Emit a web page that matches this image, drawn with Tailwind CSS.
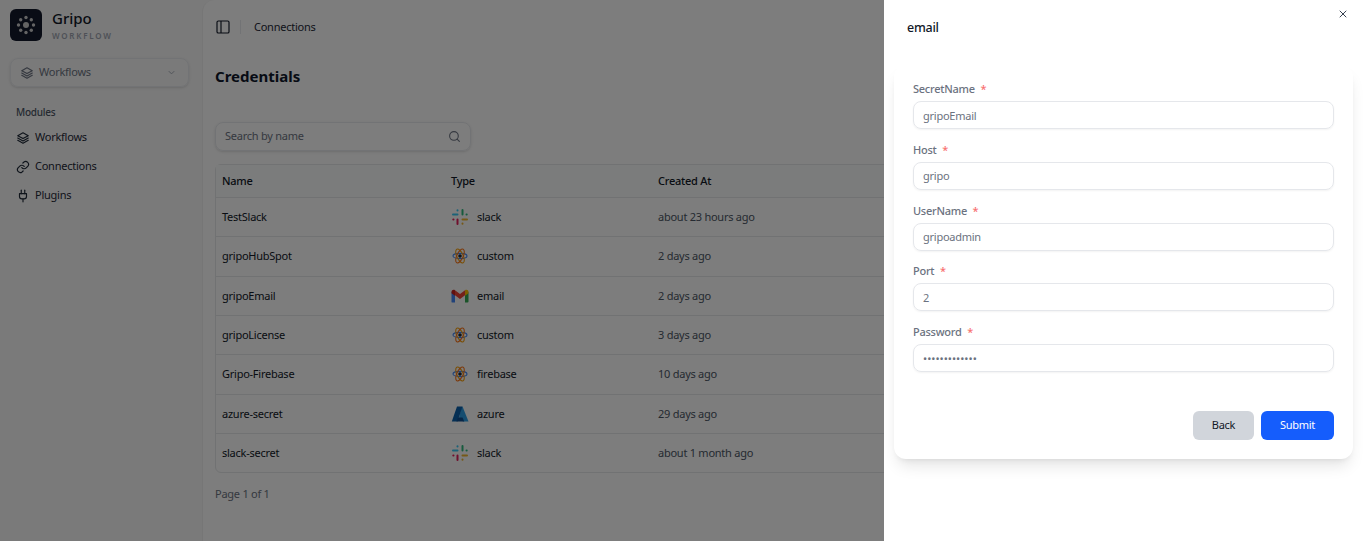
<!DOCTYPE html>
<html lang="en">
<head>
    <meta charset="UTF-8">
    <title>Gripo Connections</title>
    <script src="https://cdn.jsdelivr.net/npm/@tailwindcss/browser@4"></script>
</head>
<body class="bg-white font-['Noto_Sans',sans-serif] tracking-[-0.25px] overflow-hidden">
    <div class="relative h-[541px] w-[1363px] overflow-hidden">
        <!-- page behind the drawer -->
        <div class="flex h-full bg-[#f4f4f4]">
            <aside class="w-[202px] shrink-0 px-[10px] pt-[9px]">
                <div class="flex items-center gap-[10px]">
                    <div class="flex h-8 w-8 items-center justify-center rounded-md bg-[#12182b]">
                        <svg width="22" height="22" viewBox="0 0 22 22" fill="#c9c9c9">
                            <circle cx="11" cy="11" r="3"/>
                            <circle cx="11" cy="3.5" r="1.7"/><circle cx="16.3" cy="5.7" r="1.7"/><circle cx="18.5" cy="11" r="1.7"/><circle cx="16.3" cy="16.3" r="1.7"/>
                            <circle cx="11" cy="18.5" r="1.7"/><circle cx="5.7" cy="16.3" r="1.7"/><circle cx="3.5" cy="11" r="1.7"/><circle cx="5.7" cy="5.7" r="1.7"/>
                        </svg>
                    </div>
                    <div>
                        <div class="text-[15px] leading-[19px] font-medium tracking-normal text-[#111827]">Gripo</div>
                        <div class="mt-[3px] text-[8px] leading-[10px] font-semibold tracking-[0.22em] text-[#9ca3af]">WORKFLOW</div>
                    </div>
                </div>
                <div class="mt-[17px] flex h-[29px] w-[179px] items-center justify-between rounded-lg border border-[#e5e7eb] pr-[11px] pl-[9px] shadow-sm">
                    <div class="flex items-center gap-[5px] text-[11px] text-[#6b7280]">
                        <svg width="14" height="14" viewBox="0 0 24 24" fill="none" stroke="currentColor" stroke-width="2" stroke-linecap="round" stroke-linejoin="round">
                            <path d="M12 3 3 8l9 5 9-5-9-5Z"/><path d="m3 12 9 5 9-5"/><path d="m3 16 9 5 9-5"/>
                        </svg>
                        Workflows
                    </div>
                    <svg width="11" height="11" viewBox="0 0 24 24" fill="none" stroke="#9ca3af" stroke-width="2"><path d="m6 9 6 6 6-6"/></svg>
                </div>
                <div class="mt-[18px] px-[6px] text-[10px] leading-[14px] font-medium text-[#4b5563]">Modules</div>
                <nav class="mt-[4px] flex flex-col text-[11px] text-[#1f2937]">
                    <a class="flex h-[29px] items-center gap-[5px] px-[6px]">
                        <svg width="14" height="14" viewBox="0 0 24 24" fill="none" stroke="currentColor" stroke-width="2" stroke-linecap="round" stroke-linejoin="round"><path d="M12 3 3 8l9 5 9-5-9-5Z"/><path d="m3 12 9 5 9-5"/><path d="m3 16 9 5 9-5"/></svg>
                        Workflows
                    </a>
                    <a class="flex h-[29px] items-center gap-[5px] px-[6px]">
                        <svg width="14" height="14" viewBox="0 0 24 24" fill="none" stroke="currentColor" stroke-width="2" stroke-linecap="round" stroke-linejoin="round"><path d="M10 13a5 5 0 0 0 7.5.5l3-3a5 5 0 0 0-7-7l-1.7 1.7"/><path d="M14 11a5 5 0 0 0-7.5-.5l-3 3a5 5 0 0 0 7 7l1.7-1.7"/></svg>
                        Connections
                    </a>
                    <a class="flex h-[29px] items-center gap-[5px] px-[6px]">
                        <svg width="14" height="14" viewBox="0 0 24 24" fill="none" stroke="currentColor" stroke-width="2" stroke-linecap="round" stroke-linejoin="round"><path d="M12 22v-5"/><path d="M9 8V2"/><path d="M15 8V2"/><path d="M18 8v5a4 4 0 0 1-4 4h-4a4 4 0 0 1-4-4V8Z"/></svg>
                        Plugins
                    </a>
                </nav>
            </aside>

            <main class="flex-1 rounded-tl-xl border-l border-[#ececec] bg-[#fafafa] pl-[12px]">
                <div class="flex h-[54px] items-center">
                    <svg width="16" height="16" viewBox="0 0 24 24" fill="none" stroke="#111827" stroke-width="1.75"><rect x="3" y="3" width="18" height="18" rx="2"/><path d="M9 3v18"/></svg>
                    <div class="mr-[13px] ml-[9px] h-[14px] w-px bg-[#e5e7eb]"></div>
                    <span class="text-[11px] text-[#1f2937]">Connections</span>
                </div>
                <h1 class="mt-[10px] text-[15px] leading-[24px] font-bold tracking-normal text-[#0f172a]">Credentials</h1>
                <div class="mt-[34px] flex h-[29px] w-[256px] items-center justify-between rounded-lg border border-[#e5e7eb] pr-[9px] pl-[9px] shadow-sm">
                    <span class="text-[11px] text-[#6b7280]">Search by name</span>
                    <svg width="13" height="13" viewBox="0 0 24 24" fill="none" stroke="#6b7280" stroke-width="2" stroke-linecap="round"><circle cx="11" cy="11" r="8"/><path d="m21 21-4.3-4.3"/></svg>
                </div>
                <div class="mt-[13px] w-[1135px] rounded-md border border-[#e2e4e6] text-[11px] text-[#111827]">
                    <div class="grid h-[32px] grid-cols-[229px_207px_1fr] items-center bg-[#f7f9f8] px-[6px] font-medium">
                        <span>Name</span><span>Type</span><span>Created At</span>
                    </div>
                    <div class="grid h-[39.33px] grid-cols-[229px_207px_1fr] items-center border-t border-[#e2e4e6] px-[6px]">
                        <span>TestSlack</span>
                        <span class="flex items-center gap-[8px]"><svg width="18" height="18" viewBox="0 0 18 18"><use href="#slack"/></svg>slack</span>
                        <span class="text-[#4b5563]">about 23 hours ago</span>
                    </div>
                    <div class="grid h-[39.33px] grid-cols-[229px_207px_1fr] items-center border-t border-[#e2e4e6] px-[6px]">
                        <span>gripoHubSpot</span>
                        <span class="flex items-center gap-[8px]"><svg width="18" height="18" viewBox="0 0 18 18"><use href="#atom"/></svg>custom</span>
                        <span class="text-[#4b5563]">2 days ago</span>
                    </div>
                    <div class="grid h-[39.33px] grid-cols-[229px_207px_1fr] items-center border-t border-[#e2e4e6] px-[6px]">
                        <span>gripoEmail</span>
                        <span class="flex items-center gap-[8px]"><svg width="18" height="18" viewBox="0 0 18 18"><use href="#gmail"/></svg>email</span>
                        <span class="text-[#4b5563]">2 days ago</span>
                    </div>
                    <div class="grid h-[39.33px] grid-cols-[229px_207px_1fr] items-center border-t border-[#e2e4e6] px-[6px]">
                        <span>gripoLicense</span>
                        <span class="flex items-center gap-[8px]"><svg width="18" height="18" viewBox="0 0 18 18"><use href="#atom"/></svg>custom</span>
                        <span class="text-[#4b5563]">3 days ago</span>
                    </div>
                    <div class="grid h-[39.33px] grid-cols-[229px_207px_1fr] items-center border-t border-[#e2e4e6] px-[6px]">
                        <span>Gripo-Firebase</span>
                        <span class="flex items-center gap-[8px]"><svg width="18" height="18" viewBox="0 0 18 18"><use href="#atom"/></svg>firebase</span>
                        <span class="text-[#4b5563]">10 days ago</span>
                    </div>
                    <div class="grid h-[39.33px] grid-cols-[229px_207px_1fr] items-center border-t border-[#e2e4e6] px-[6px]">
                        <span>azure-secret</span>
                        <span class="flex items-center gap-[8px]"><svg width="18" height="18" viewBox="0 0 18 18"><use href="#azure"/></svg>azure</span>
                        <span class="text-[#4b5563]">29 days ago</span>
                    </div>
                    <div class="grid h-[39.33px] grid-cols-[229px_207px_1fr] items-center border-t border-[#e2e4e6] px-[6px]">
                        <span>slack-secret</span>
                        <span class="flex items-center gap-[8px]"><svg width="18" height="18" viewBox="0 0 18 18"><use href="#slack"/></svg>slack</span>
                        <span class="text-[#4b5563]">about 1 month ago</span>
                    </div>
                </div>
                <p class="mt-[13px] text-[11px] leading-[16px] text-[#6b7280]">Page 1 of 1</p>
            </main>
        </div>

        <!-- dimmed backdrop -->
        <div class="absolute inset-0 bg-black/50"></div>

        <!-- drawer -->
        <section class="absolute top-0 right-0 h-full w-[479px] bg-white">
            <button class="absolute top-[8px] right-[14px] text-[#374151]">
                <svg class="block" width="12" height="12" viewBox="0 0 24 24" fill="none" stroke="currentColor" stroke-width="2" stroke-linecap="round"><path d="M18 6 6 18"/><path d="m6 6 12 12"/></svg>
            </button>
            <h2 class="pt-[18px] pl-[23px] text-[12.5px] leading-[20px] font-medium text-[#111827]">email</h2>
            <form class="mt-[27px] ml-[10px] h-[394px] w-[459px] rounded-xl bg-white px-[19px] pt-[16px] shadow-lg">
                <div class="flex flex-col gap-[12.75px]">
                    <div>
                        <label class="block text-[11px] leading-[16px] font-medium text-[#6b7280]">SecretName <span class="ml-[3px] text-[#f87171]">*</span></label>
                        <input class="mt-[4px] block h-[28px] w-full rounded-lg border border-[#e5e7eb] px-[9px] text-[11px] text-[#6b7280] shadow-xs" value="gripoEmail">
                    </div>
                    <div>
                        <label class="block text-[11px] leading-[16px] font-medium text-[#6b7280]">Host <span class="ml-[3px] text-[#f87171]">*</span></label>
                        <input class="mt-[4px] block h-[28px] w-full rounded-lg border border-[#e5e7eb] px-[9px] text-[11px] text-[#6b7280] shadow-xs" value="gripo">
                    </div>
                    <div>
                        <label class="block text-[11px] leading-[16px] font-medium text-[#6b7280]">UserName <span class="ml-[3px] text-[#f87171]">*</span></label>
                        <input class="mt-[4px] block h-[28px] w-full rounded-lg border border-[#e5e7eb] px-[9px] text-[11px] text-[#6b7280] shadow-xs" value="gripoadmin">
                    </div>
                    <div>
                        <label class="block text-[11px] leading-[16px] font-medium text-[#6b7280]">Port <span class="ml-[3px] text-[#f87171]">*</span></label>
                        <input class="mt-[4px] block h-[28px] w-full rounded-lg border border-[#e5e7eb] px-[9px] text-[11px] text-[#6b7280] shadow-xs" value="2">
                    </div>
                    <div>
                        <label class="block text-[11px] leading-[16px] font-medium text-[#6b7280]">Password <span class="ml-[3px] text-[#f87171]">*</span></label>
                        <input type="password" class="mt-[4px] block h-[28px] w-full rounded-lg border border-[#e5e7eb] px-[9px] text-[11px] tracking-normal text-[#6b7280] shadow-xs" value="gripoadmin123">
                    </div>
                </div>
                <div class="mt-[39px] flex justify-end gap-[7px] text-[11px]">
                    <button type="button" class="h-[29px] w-[61px] rounded-md bg-[#d1d5db] text-[#111827]">Back</button>
                    <button type="button" class="h-[29px] w-[73px] rounded-md bg-[#155dfc] text-white">Submit</button>
                </div>
            </form>
        </section>
    </div>

    <!-- brand icons, reused in the table -->
    <svg class="hidden" width="0" height="0">
        <defs>
            <g id="slack" fill="none" stroke-width="2" stroke-linecap="round">
                <path d="M2 6.5h4.5M6.5 2.3v.2" stroke="#36c5f0"/>
                <path d="M11.5 2v4.5M15.7 6.5h-.2" stroke="#2eb67d"/>
                <path d="M16 11.5h-4.5M11.5 15.7v-.2" stroke="#ecb22e"/>
                <path d="M6.5 16v-4.5M2.3 11.5h.2" stroke="#e01e5a"/>
            </g>
            <g id="atom" fill="none" stroke-width="1.1">
                <ellipse cx="9" cy="9" rx="7" ry="2.6" stroke="#3b82f6"/>
                <ellipse cx="9" cy="9" rx="7.5" ry="3.2" stroke="#f59e0b" transform="rotate(65 9 9)"/>
                <ellipse cx="9" cy="9" rx="7.5" ry="3.2" stroke="#f97316" transform="rotate(115 9 9)"/>
                <circle cx="9" cy="9" r="1.8" fill="#1f2937" stroke="none"/>
            </g>
            <g id="gmail">
                <path d="M.5 15V5l3.5 2.5V15.5H1.5a1 1 0 0 1-1-.5Z" fill="#4285f4"/>
                <path d="M14 15.5V7.5L17.5 5v9.5a1 1 0 0 1-1 1Z" fill="#34a853"/>
                <path d="M4 3.2 9 7l5-3.8v5L9 12 4 8.2Z" fill="#ea4335"/>
                <path d="M14 3.2c1.5-1.1 3.5-.2 3.5 1.6V6.2L14 8.8Z" fill="#fbbc04"/>
                <path d="M.5 4.8C.5 3 2.5 2.1 4 3.2v5.6L.5 6.2Z" fill="#c5221f"/>
            </g>
            <g id="azure">
                <path d="M11.5 1.5 17.5 16.5H12L8 12.5 10 4Z" fill="#2a9be0"/>
                <path d="M6 1.5H11.5L6.5 16.5H.8Z" fill="#0a5ea8"/>
                <path d="M7 12.5h4.5l1.8 4H5.5Z" fill="#0f4c8f"/>
            </g>
        </defs>
    </svg>
</body>
</html>
